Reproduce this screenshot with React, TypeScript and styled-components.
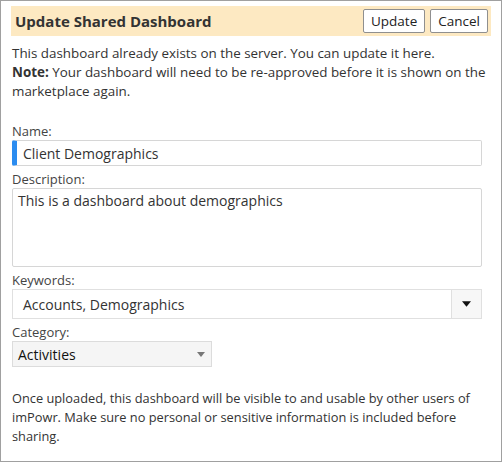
import React from "react";
import styled, { createGlobalStyle } from "styled-components";

const GlobalStyle = createGlobalStyle`
  html, body {
    margin: 0;
    padding: 0;
    background: #ffffff;
  }
  body {
    font-family: "Open Sans", "Noto Sans", sans-serif;
    color: #333333;
  }
  * { box-sizing: border-box; }
`;

const Dialog = styled.div`
  width: 502px;
  height: 462px;
  border: 1px solid #a0a0a0;
  background: #ffffff;
  padding: 5px 10px 0 10px;
  display: flex;
  flex-direction: column;
`;

const Header = styled.div`
  height: 30px;
  background: #fde9c2;
  display: flex;
  align-items: center;
  justify-content: space-between;
  padding: 0 3px 0 4px;
`;

const Title = styled.h1`
  margin: 0;
  font-size: 15px;
  font-weight: 700;
  color: #333333;
`;

const Actions = styled.div`
  display: flex;
  gap: 5px;
`;

const Button = styled.button`
  height: 24px;
  padding: 0 7px;
  border: 1px solid #8f8f8f;
  border-radius: 2px;
  background: #ffffff;
  font-family: inherit;
  font-size: 13.5px;
  color: #222222;
`;

const Body = styled.div`
  padding: 8px 0 0 1px;
  display: flex;
  flex-direction: column;
`;

const Para = styled.p`
  margin: 0;
  font-size: 13.4px;
  line-height: 19px;
  color: #333333;
`;

const Form = styled.div`
  margin: 22px 9px 0 0;
  display: flex;
  flex-direction: column;
`;

const Label = styled.label<{ $first?: boolean }>`
  font-size: 13px;
  line-height: 17px;
  color: #444444;
  margin-top: ${(p) => (p.$first ? "0" : "5px")};
`;

const NameInput = styled.div`
  height: 26px;
  border: 1px solid #d6d6d6;
  border-left: 5px solid #2b8cf0;
  border-radius: 2px;
  display: flex;
  align-items: center;
  padding-left: 6px;
  font-size: 14px;
  color: #333333;
`;

const TextArea = styled.div`
  height: 79px;
  border: 1px solid #d6d6d6;
  border-radius: 2px;
  padding: 2px 5px;
  font-size: 14px;
  line-height: 20px;
  color: #333333;
`;

const Combo = styled.div`
  height: 30px;
  border: 1px solid #e0e0e0;
  display: flex;
  align-items: stretch;
`;

const ComboText = styled.div`
  flex: 1;
  display: flex;
  align-items: center;
  padding-left: 10px;
  font-size: 14px;
  color: #333333;
`;

const ComboToggle = styled.div`
  width: 30px;
  border-left: 1px solid #e0e0e0;
  background: #f7f7f7;
  display: flex;
  align-items: center;
  justify-content: center;
`;

const Select = styled.div`
  width: 200px;
  height: 26px;
  border: 1px solid #dcdcdc;
  background: #f5f5f5;
  display: flex;
  align-items: center;
  justify-content: space-between;
  padding: 0 6px 0 5px;
  font-size: 14px;
  color: #111111;
`;

const Footer = styled(Para)`
  margin-top: 22px;
  padding-right: 9px;
  font-size: 12.8px;
`;

const Caret = ({ color, w, h }: { color: string; w: number; h: number }) => (
  <svg width={w} height={h} viewBox="0 0 10 6">
    <polygon points="0,0 10,0 5,6" fill={color} />
  </svg>
);

export default function App() {
  return (
    <>
      <GlobalStyle />
      <Dialog>
        <Header>
          <Title>Update Shared Dashboard</Title>
          <Actions>
            <Button>Update</Button>
            <Button>Cancel</Button>
          </Actions>
        </Header>
        <Body>
          <Para>This dashboard already exists on the server. You can update it here.</Para>
          <Para>
            <b>Note:</b> Your dashboard will need to be re-approved before it is shown on the
            marketplace again.
          </Para>
          <Form>
            <Label $first>Name:</Label>
            <NameInput>Client Demographics</NameInput>
            <Label>Description:</Label>
            <TextArea>This is a dashboard about demographics</TextArea>
            <Label>Keywords:</Label>
            <Combo>
              <ComboText>Accounts, Demographics</ComboText>
              <ComboToggle>
                <Caret color="#111111" w={9} h={6} />
              </ComboToggle>
            </Combo>
            <Label>Category:</Label>
            <Select>
              <span>Activities</span>
              <Caret color="#777777" w={8} h={5} />
            </Select>
          </Form>
          <Footer>
            Once uploaded, this dashboard will be visible to and usable by other users of
            imPowr. Make sure no personal or sensitive information is included before
            sharing.
          </Footer>
        </Body>
      </Dialog>
    </>
  );
}
